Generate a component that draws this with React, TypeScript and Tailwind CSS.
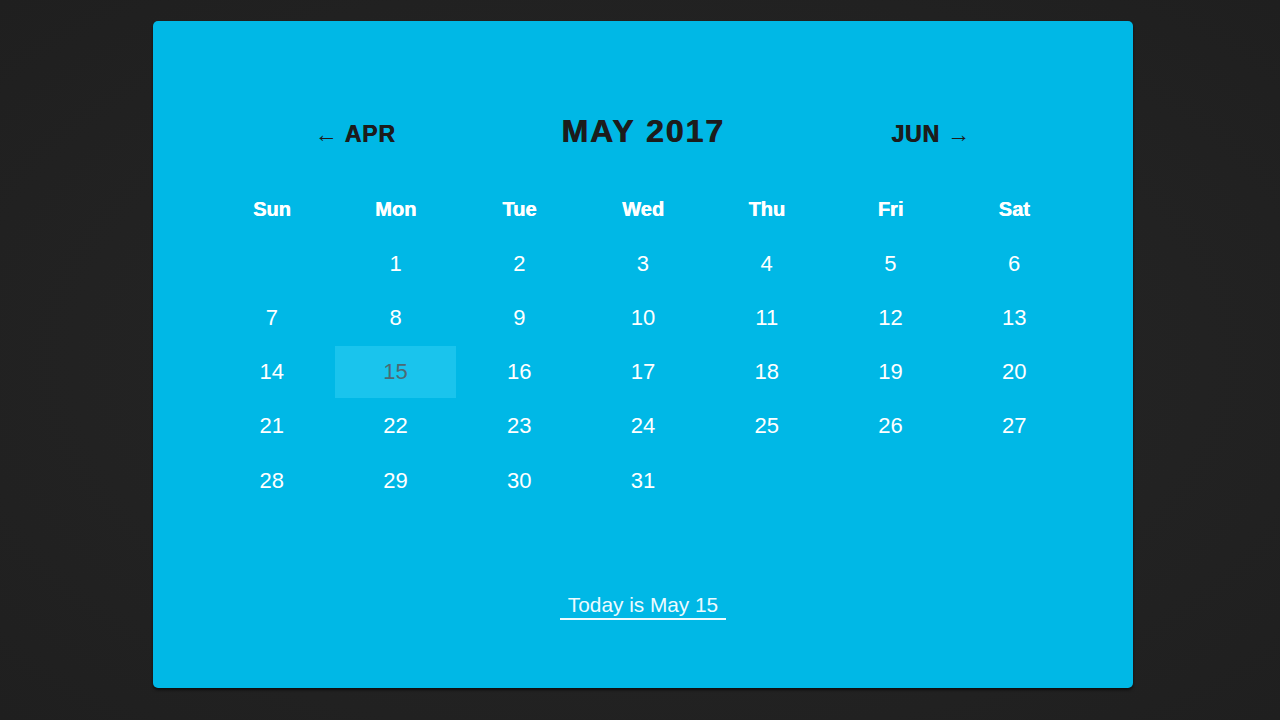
import React from "react";

const DAYS = ["Sun", "Mon", "Tue", "Wed", "Thu", "Fri", "Sat"];
const TODAY = 15;

// May 2017 starts on a Monday
const cells: (number | null)[] = [null, ...Array.from({ length: 31 }, (_, i) => i + 1)];

const App = () => {
  return (
    <div
      className="min-h-screen w-full bg-[#222222] pt-[21px]"
      style={{ background: "radial-gradient(ellipse at center, #272727 0%, #1f1f1f 100%)" }}
    >
      <div className="ml-[153px] w-[980px] h-[667px] rounded-[5px] bg-[#00b8e6] px-[58px] pt-[86px] shadow-[0_2px_3px_rgba(0,0,0,0.6)] font-['Liberation_Sans',Arial,sans-serif]">
        {/* Month navigation */}
        <div className="grid grid-cols-3 items-baseline h-[54px] text-[#1c1c1c] font-bold">
          <div className="text-center text-[23px] tracking-[0.8px] [text-shadow:0.6px_0_0_#1c1c1c]">
            <span className="font-normal [text-shadow:none]">←</span> APR
          </div>
          <div className="text-center text-[32px] tracking-[2px] [text-shadow:0.8px_0_0_#1c1c1c]">MAY 2017</div>
          <div className="text-center text-[23px] tracking-[0.8px] [text-shadow:0.6px_0_0_#1c1c1c]">
            JUN <span className="font-normal [text-shadow:none]">→</span>
          </div>
        </div>

        {/* Week days */}
        <div className="mt-[22px] grid grid-cols-7 gap-x-[2px]">
          {DAYS.map((d) => (
            <div
              key={d}
              className="h-[52px] flex items-center justify-center text-white font-bold text-[20px] [text-shadow:0.5px_0_0_#ffffff]"
            >
              {d}
            </div>
          ))}
        </div>

        {/* Dates */}
        <div className="mt-[2px] grid grid-cols-7 gap-x-[2px] gap-y-[2.25px]">
          {cells.map((n, i) => (
            <div
              key={i}
              className={
                n === TODAY
                  ? "h-[52px] flex items-center justify-center text-[22px] bg-[#1ac4ed] text-[#4d6a73]"
                  : "h-[52px] flex items-center justify-center text-[22px] text-white"
              }
            >
              {n}
            </div>
          ))}
        </div>

        {/* Footer */}
        <div className="mt-[87px] flex justify-center">
          <span className="px-[8px] pb-[1px] text-[20.8px] leading-[24px] text-[#eefbff] border-b-2 border-[#eefbff]">
            Today is May 15
          </span>
        </div>
      </div>
    </div>
  );
};

export default App;
